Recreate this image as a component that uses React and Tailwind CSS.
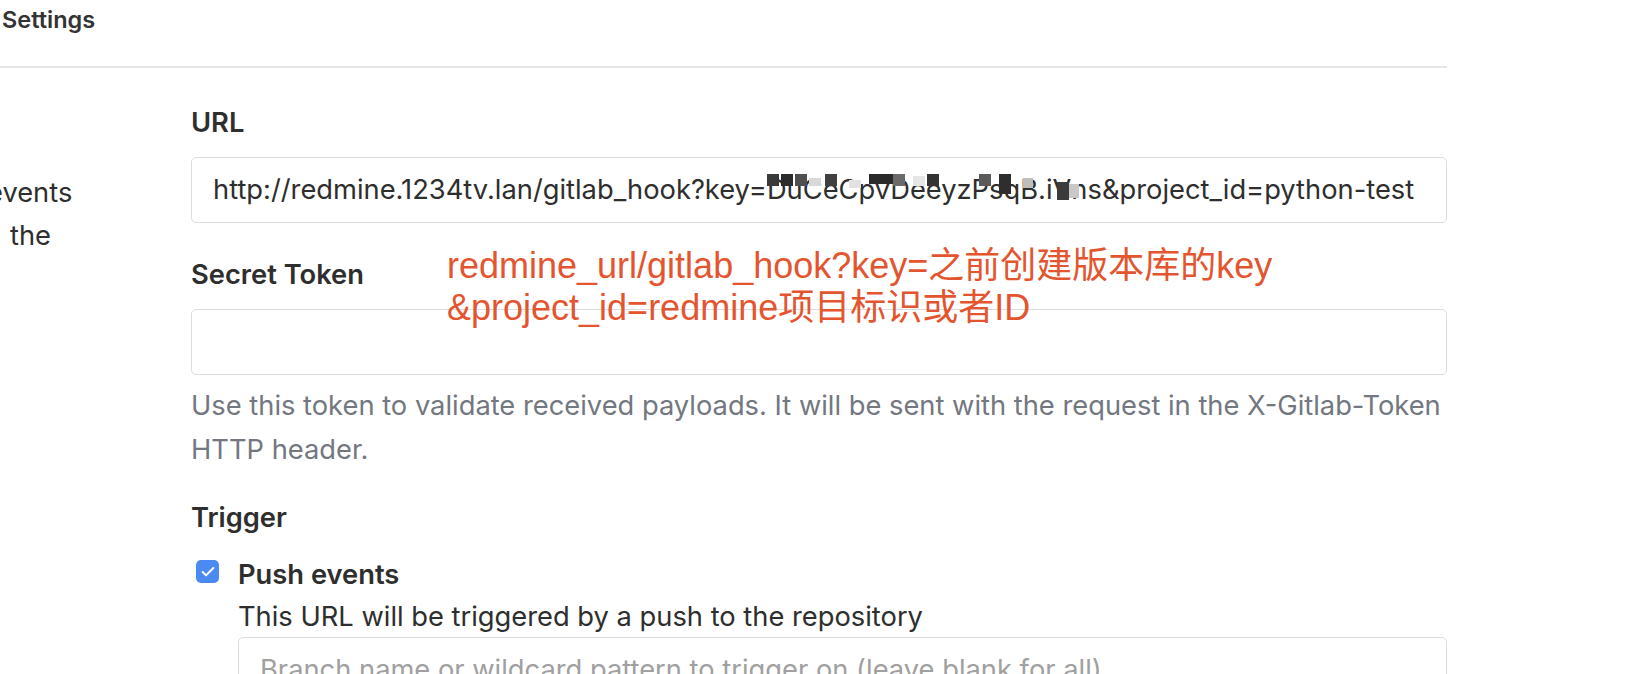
import { Check } from 'lucide-react'

const sans = { fontFamily: 'Inter, "Liberation Sans", "Noto Sans CJK SC", sans-serif' }

// bits of grey pixelation sitting over the secret key
const mosaic = [
  { l: 0, t: 4, w: 12, h: 12, c: '#3a3a3a' },
  { l: 14, t: 4, w: 12, h: 12, c: '#2c2c2c' },
  { l: 28, t: 4, w: 12, h: 12, c: '#505050' },
  { l: 42, t: 8, w: 12, h: 8, c: '#d8d8d8' },
  { l: 58, t: 4, w: 12, h: 12, c: '#404040' },
  { l: 82, t: 10, w: 12, h: 8, c: '#e2e2e2' },
  { l: 102, t: 4, w: 24, h: 10, c: '#2a2a2a' },
  { l: 126, t: 4, w: 12, h: 12, c: '#6a6a6a' },
  { l: 146, t: 6, w: 12, h: 10, c: '#e6e6e6' },
  { l: 160, t: 4, w: 12, h: 12, c: '#333333' },
  { l: 212, t: 4, w: 12, h: 12, c: '#5a5a5a' },
  { l: 232, t: 4, w: 12, h: 20, c: '#2e2e2e' },
  { l: 256, t: 8, w: 10, h: 10, c: '#bdbdbd' },
  { l: 290, t: 12, w: 12, h: 18, c: '#3b3b3b' },
  { l: 302, t: 14, w: 10, h: 14, c: '#c8c8c8' },
]

function Field({ children, className = '' }) {
  return (
    <div className={`h-[66px] rounded-[5px] border border-[#dcdcdc] bg-white pl-[21px] flex items-center text-[27.3px] whitespace-nowrap overflow-hidden ${className}`}>
      {children}
    </div>
  )
}

export default function App() {
  return (
    <div className="relative w-[1632px] h-[674px] overflow-hidden bg-white text-[#2e2e2e]" style={sans}>
      <div className="w-[1447px] h-[68px] border-b-2 border-[#e6e6e6] pl-[2px] pt-[5px]">
        <div className="text-[23.5px] leading-[30px] font-semibold text-[#333]">Settings</div>
      </div>

      <div className="flex">
        <div className="w-[191px] shrink-0 pt-[103px] text-[27.3px] leading-[43px] whitespace-nowrap overflow-hidden">
          <div className="-ml-[13px]">events</div>
          <div className="ml-[10px]">the</div>
        </div>

        <div className="w-[1256px] pt-[35px]">
          <div className="text-[27.3px] leading-[40px] font-semibold">URL</div>
          <Field className="mt-[14px]">
            <span>http://redmine.1234tv.lan/gitlab_hook?key=</span>
            <span className="relative">
              DuCeCpvDeeyzPsqB.iVns
              {mosaic.map((m, i) => (
                <span
                  key={i}
                  className="absolute"
                  style={{ left: m.l, top: m.t, width: m.w, height: m.h, background: m.c }}
                />
              ))}
            </span>
            <span>&amp;project_id=python-test</span>
          </Field>

          <div className="mt-[32px] text-[27.3px] leading-[40px] font-semibold">Secret Token</div>
          <Field className="mt-[14px]" />

          <div className="mt-[9px] text-[27.3px] leading-[44px] text-[#737780]">
            Use this token to validate received payloads. It will be sent with the request in the X-Gitlab-Token HTTP header.
          </div>

          <div className="mt-[26px] text-[27.3px] leading-[40px] font-semibold">Trigger</div>

          <div className="mt-[17px] flex">
            <div className="w-[23px] h-[23px] mt-[5px] ml-[5px] rounded-[5px] bg-[#4b8af2] flex items-center justify-center">
              <Check size={16} strokeWidth={3} color="#fff" />
            </div>
            <div className="ml-[19px]">
              <div className="text-[27.3px] leading-[40px] font-semibold">Push events</div>
              <div className="mt-[2px] text-[27.3px] leading-[40px]">This URL will be triggered by a push to the repository</div>
              <Field className="w-[1209px]">
                <span className="text-[#a0a0a0]">Branch name or wildcard pattern to trigger on (leave blank for all)</span>
              </Field>
            </div>
          </div>
        </div>
      </div>

      <div
        className="absolute left-[447px] top-[245px] text-[36px] leading-[42px] text-[#e4552f] whitespace-nowrap"
        style={{ fontFamily: '"Liberation Sans", "Noto Sans CJK SC", sans-serif' }}
      >
        <div>redmine_url/gitlab_hook?key=之前创建版本库的key</div>
        <div>&amp;project_id=redmine项目标识或者ID</div>
      </div>
    </div>
  )
}
